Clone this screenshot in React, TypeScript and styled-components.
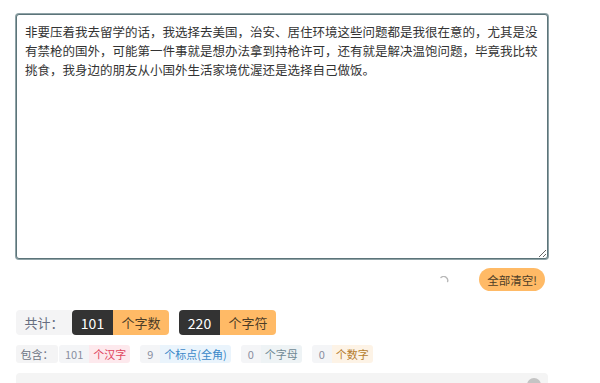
import React, {useState} from 'react';
import styled, {createGlobalStyle} from "styled-components";

const initialText = "非要压着我去留学的话，我选择去美国，治安、居住环境这些问题都是我很在意的，尤其是没有禁枪的国外，可能第一件事就是想办法拿到持枪许可，还有就是解决温饱问题，毕竟我比较挑食，我身边的朋友从小国外生活家境优渥还是选择自己做饭。";

type Kind = 'han' | 'punct' | 'letter' | 'digit';

const kindColors: Record<Kind, {bg: string; fg: string}> = {
    han: {bg: '#fde9ed', fg: '#e0455e'},
    punct: {bg: '#eaf4fc', fg: '#3a88c8'},
    letter: {bg: '#eef3f5', fg: '#6e8994'},
    digit: {bg: '#fdf3e6', fg: '#b57d2e'},
};

const App = () => {
    const [text, setText] = useState<string>(initialText);

    const han = (text.match(/[\u4e00-\u9fa5]/g) || []).length;
    const punct = (text.match(/[\u3000-\u303f\uff00-\uffef]/g) || []).length;
    const letters = (text.match(/[a-zA-Z]/g) || []).length;
    const digits = (text.match(/[0-9]/g) || []).length;
    const chars = han * 2 + punct * 2 + (text.length - han - punct);

    const details: {n: number; label: string; kind: Kind}[] = [
        {n: han, label: '个汉字', kind: 'han'},
        {n: punct, label: '个标点(全角)', kind: 'punct'},
        {n: letters, label: '个字母', kind: 'letter'},
        {n: digits, label: '个数字', kind: 'digit'},
    ];

    return (
        <Page>
            <GlobalStyle/>
            <Editor value={text} onChange={e => setText(e.target.value)}/>
            <Actions>
                <Spinner width="10" height="10" viewBox="0 0 10 10">
                    <path d="M2 1.6 A4 4 0 0 1 8.6 5.6" fill="none" stroke="#b8b8b8" strokeWidth="1.4" strokeLinecap="round"/>
                </Spinner>
                <ClearButton onClick={() => setText("")}>全部清空!</ClearButton>
            </Actions>
            <TotalRow>
                <TotalLabel>共计：</TotalLabel>
                <Group>
                    <Count>{han}</Count>
                    <Unit>个字数</Unit>
                </Group>
                <Group>
                    <Count>{chars}</Count>
                    <Unit>个字符</Unit>
                </Group>
            </TotalRow>
            <DetailRow>
                <DetailLabel>包含：</DetailLabel>
                {details.map(d => (
                    <Group key={d.kind}>
                        <DetailNum>{d.n}</DetailNum>
                        <DetailUnit $kind={d.kind}>{d.label}</DetailUnit>
                    </Group>
                ))}
            </DetailRow>
            <Result>
                <Dot/>
            </Result>
        </Page>
    );
};

export default App;

const GlobalStyle = createGlobalStyle`
  html, body {
    margin: 0;
    padding: 0;
    background: #ffffff;
    overflow: hidden;
  }

  body {
    font-family: "Noto Sans CJK SC", "Noto Sans", sans-serif;
  }
`

const Page = styled.div`
  box-sizing: border-box;
  width: 600px;
  height: 383px;
  padding: 14px 0 0 16px;
  display: flex;
  flex-direction: column;
  overflow: hidden;

  & > * {
    flex-shrink: 0;
  }
`

const Editor = styled.textarea`
  box-sizing: border-box;
  width: 532px;
  height: 245px;
  margin: 0;
  padding: 7px 4px 6px 8px;
  border: 1px solid #5c7479;
  box-shadow: 0 0 0 1px #8fa3a7;
  border-radius: 3px;
  font-family: "Noto Sans CJK SC", sans-serif;
  font-size: 12.5px;
  line-height: 19px;
  color: #333333;
  resize: vertical;
  outline: none;
`

const Actions = styled.div`
  width: 532px;
  display: flex;
  align-items: center;
  justify-content: flex-end;
  gap: 30px;
  margin-top: 9px;
  padding-right: 3px;
  box-sizing: border-box;
  height: 23px;
`

const Spinner = styled.svg`
  display: block;
  margin-top: 2px;
`

const ClearButton = styled.button`
  height: 23px;
  padding: 0 8px;
  border: none;
  border-radius: 12px;
  background: #ffba66;
  color: #4d3d26;
  font-family: "Noto Sans CJK SC", sans-serif;
  font-size: 11.5px;
  cursor: pointer;
`

const TotalRow = styled.div`
  display: flex;
  align-items: center;
  gap: 10px;
  margin-top: 19px;
  height: 25px;
`

const TotalLabel = styled.div`
  height: 25px;
  width: 56px;
  margin-right: -10px;
  border-radius: 4px 0 0 4px;
  background: #f4f4f5;
  color: #666d80;
  font-size: 13px;
  display: flex;
  align-items: center;
  justify-content: center;
`

const Group = styled.div`
  display: flex;
`

const Count = styled.div`
  height: 25px;
  width: 41px;
  border-radius: 4px 0 0 4px;
  background: #333333;
  color: #ffffff;
  font-size: 14px;
  display: flex;
  align-items: center;
  justify-content: center;
`

const Unit = styled.div`
  height: 25px;
  width: 56px;
  border-radius: 0 4px 4px 0;
  background: #ffba66;
  color: #4d3d26;
  font-size: 13px;
  display: flex;
  align-items: center;
  justify-content: center;
`

const DetailRow = styled.div`
  display: flex;
  align-items: center;
  gap: 10px;
  margin-top: 10px;
  height: 18px;
`

const DetailLabel = styled.div`
  height: 18px;
  width: 42px;
  margin-right: -9px;
  border-radius: 3px;
  background: #f4f4f5;
  color: #6f7484;
  font-size: 11px;
  display: flex;
  align-items: center;
  justify-content: center;
`

const DetailNum = styled.div`
  height: 18px;
  min-width: 20px;
  padding: 0 6px;
  box-sizing: border-box;
  border-radius: 3px 0 0 3px;
  background: #f4f5f7;
  color: #8a8fa0;
  font-size: 11px;
  display: flex;
  align-items: center;
  justify-content: center;
`

const DetailUnit = styled.div<{ $kind: Kind }>`
  height: 18px;
  padding: 0 4px;
  border-radius: 0 3px 3px 0;
  background: ${props => kindColors[props.$kind].bg};
  color: ${props => kindColors[props.$kind].fg};
  font-size: 11px;
  display: flex;
  align-items: center;
`

const Result = styled.div`
  position: relative;
  margin-top: 10px;
  height: 40px;
  width: 532px;
  border-radius: 4px;
  background: #f4f4f4;
`

const Dot = styled.div`
  position: absolute;
  top: 5px;
  right: 7px;
  width: 14px;
  height: 14px;
  border-radius: 50%;
  background: #c4c4c4;
`
